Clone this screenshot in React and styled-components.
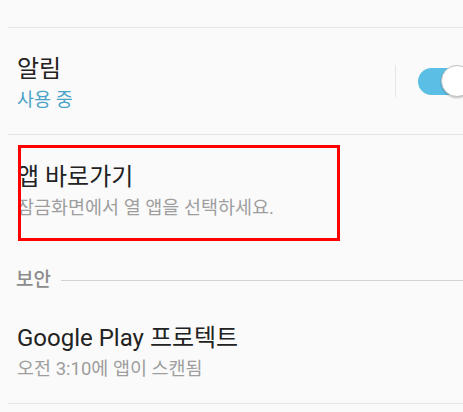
import React from "react";
import styled, { createGlobalStyle } from "styled-components";

const GlobalStyle = createGlobalStyle`
  html, body {
    margin: 0;
    padding: 0;
    background: #fafafa;
    overflow: hidden;
  }
  body {
    font-family: Roboto, "Noto Sans CJK KR", sans-serif;
  }
`;

// 설정 목록 전체
const Page = styled.div`
  width: 463px;
  height: 412px;
  padding-left: 8px;
  box-sizing: border-box;
  background: #fafafa;
  overflow: hidden;
`;

// 위에서 잘린 항목의 아래 선
const TopEdge = styled.div`
  height: 28px;
  box-sizing: border-box;
  border-bottom: 1px solid #e4e4e4;
`;

const Item = styled.div`
  position: relative;
  display: flex;
  align-items: center;
  height: ${props => props.height || "107px"};
  box-sizing: border-box;
  padding-left: 9px;
  border-bottom: ${props => (props.divider ? "1px solid #e4e4e4" : "none")};
`;

const TextBlock = styled.div`
  flex: 1;
  display: flex;
  flex-direction: column;
  margin-top: ${props => props.shift || "0px"};
`;

const Title = styled.div`
  font-size: 24px;
  line-height: 32px;
  color: #222222;
`;

const Sub = styled.div`
  margin-top: 3px;
  font-size: 18.5px;
  line-height: 24px;
  color: ${props => props.color || "#9e9e9e"};
`;

const Separator = styled.div`
  width: 1px;
  height: 32px;
  background: #e6e6e6;
  margin-right: 22px;
`;

// 스위치 (오른쪽 끝에서 잘림)
const SwitchWrap = styled.div`
  position: relative;
  width: 45px;
  height: 34px;
  display: flex;
  align-items: center;
`;

const Track = styled.div`
  width: 60px;
  height: 27px;
  border-radius: 14px;
  background: #5bbfe5;
  flex-shrink: 0;
`;

const Thumb = styled.div`
  position: absolute;
  left: 23px;
  top: 1px;
  width: 32px;
  height: 32px;
  box-sizing: border-box;
  border-radius: 50%;
  background: #ffffff;
  border: 1px solid #c4c4c4;
  box-shadow: 0 1px 2px rgba(0, 0, 0, 0.25);
`;

// 빨간 강조 상자
const Highlight = styled.div`
  position: absolute;
  left: 10px;
  top: 10px;
  width: 322px;
  height: 96px;
  box-sizing: border-box;
  border: 3px solid #ff0000;
  pointer-events: none;
`;

const SectionHeader = styled.div`
  display: flex;
  align-items: center;
  gap: 10px;
  height: 56px;
  box-sizing: border-box;
  padding: 22px 0 0 8px;
`;

const SectionLabel = styled.div`
  font-size: 19px;
  line-height: 24px;
  font-weight: 500;
  color: #8c8c8c;
`;

const SectionLine = styled.div`
  flex: 1;
  height: 1px;
  background: #d2d2d2;
`;

const App = () => {
  return (
    <Page>
      <GlobalStyle />
      <TopEdge />

      <Item divider>
        <TextBlock shift="2px">
          <Title>알림</Title>
          <Sub color="#4aa3c8">사용 중</Sub>
        </TextBlock>
        <Separator />
        <SwitchWrap>
          <Track />
          <Thumb />
        </SwitchWrap>
      </Item>

      <Item height="106px">
        <TextBlock shift="5px">
          <Title>앱 바로가기</Title>
          <Sub>잠금화면에서 열 앱을 선택하세요.</Sub>
        </TextBlock>
        <Highlight />
      </Item>

      <SectionHeader>
        <SectionLabel>보안</SectionLabel>
        <SectionLine />
      </SectionHeader>

      <Item divider>
        <TextBlock shift="3px">
          <Title>Google Play 프로텍트</Title>
          <Sub>오전 3:10에 앱이 스캔됨</Sub>
        </TextBlock>
      </Item>
    </Page>
  );
};

export default App;
